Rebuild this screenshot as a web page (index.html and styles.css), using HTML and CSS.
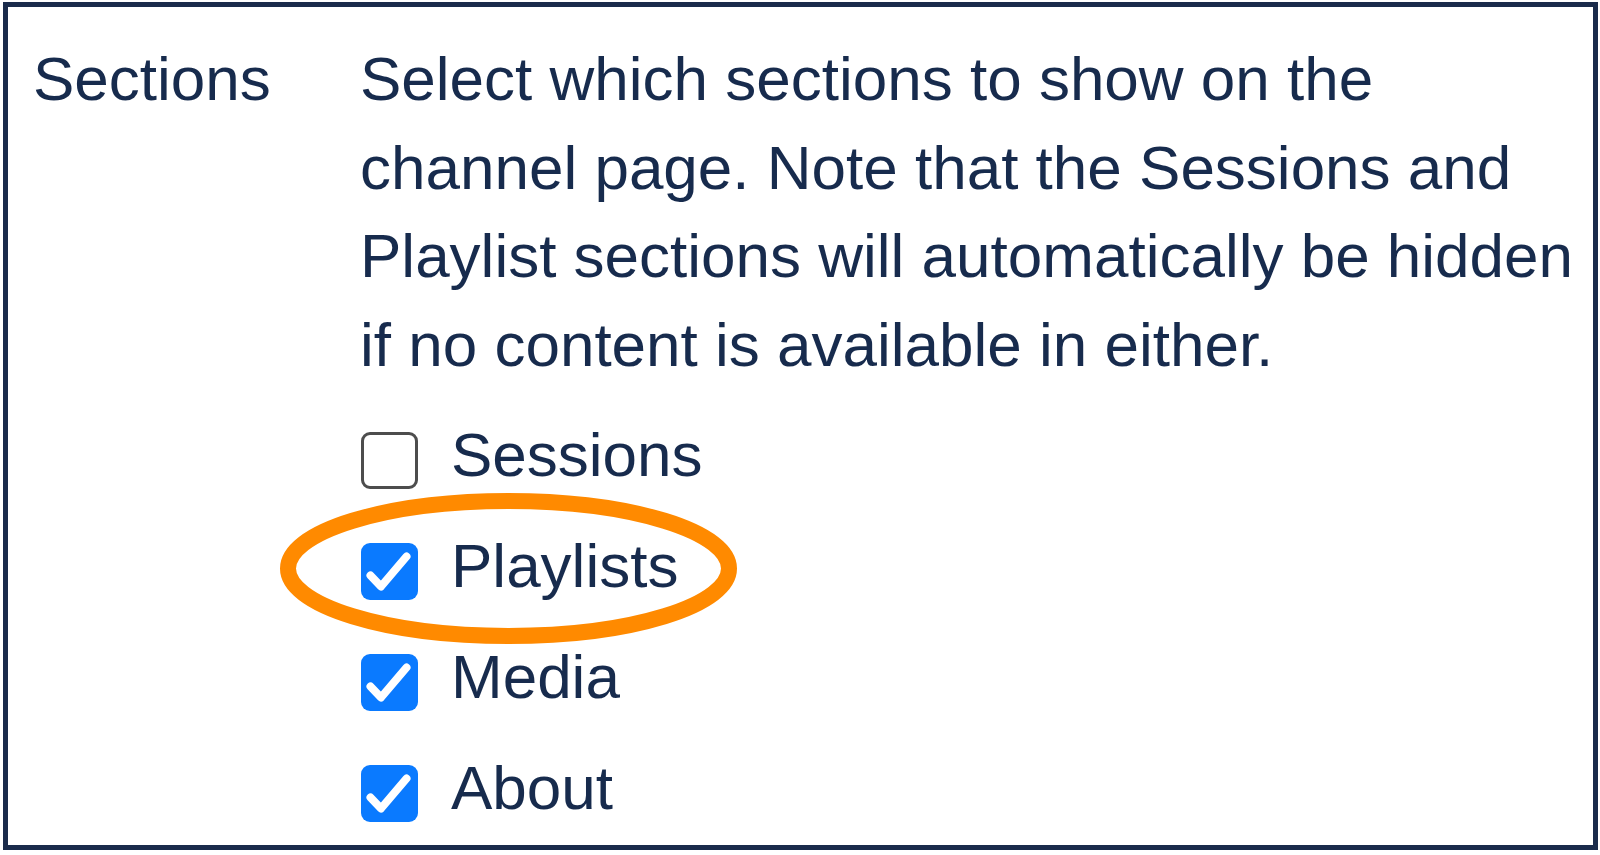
FILE: index.html
```html
<!DOCTYPE html>
<html lang="en">
<head>
  <meta charset="UTF-8">
  <meta name="viewport" content="width=device-width, initial-scale=1.0">
  <link rel="stylesheet" href="styles.css">
  <title>Channel sections</title>
</head>
<body>
  <div class="frame">
    <div class="setting">
      <div class="setting-label">Sections</div>
      <div class="setting-body">
        <p class="help">Select which sections to show on the channel page. Note that the Sessions and Playlist sections will automatically be hidden if no content is available in either.</p>

        <!-- Section toggles -->
        <div class="options">
          <label class="option">
            <span class="box"></span>
            <span class="option-text">Sessions</span>
          </label>
          <label class="option highlighted">
            <span class="box checked">
              <svg viewBox="0 0 57 57"><polyline points="9.5,32.5 20,43.5 45.5,13.5"/></svg>
            </span>
            <span class="option-text">Playlists</span>
            <svg class="ring" viewBox="0 0 457 151"><ellipse cx="228.5" cy="75.5" rx="220.5" ry="67.5"/></svg>
          </label>
          <label class="option">
            <span class="box checked">
              <svg viewBox="0 0 57 57"><polyline points="9.5,32.5 20,43.5 45.5,13.5"/></svg>
            </span>
            <span class="option-text">Media</span>
          </label>
          <label class="option">
            <span class="box checked">
              <svg viewBox="0 0 57 57"><polyline points="9.5,32.5 20,43.5 45.5,13.5"/></svg>
            </span>
            <span class="option-text">About</span>
          </label>
        </div>
      </div>
    </div>
  </div>
</body>
</html>
```

FILE: styles.css
```css
body {
  margin: 0;
  background-color: #fff;
  font-family: "Liberation Sans", Arial, sans-serif;
  color: #172b4d;
}

.frame {
  box-sizing: border-box;
  width: 1595px;
  height: 848px;
  margin: 2px 0 0 3px;
  border: 5px solid #1a2b4b;
  padding: 28px 0 0 25px;
  overflow: hidden;
}

.setting {
  display: flex;
}

.setting-label {
  width: 327px;
  flex-shrink: 0;
  font-size: 62px;
  line-height: 1.43;
}

.setting-body {
  flex: 1;
}

.help {
  margin: 0;
  font-size: 62px;
  line-height: 1.43;
}

.options {
  display: flex;
  flex-direction: column;
  margin-top: 9px;
}

.option {
  position: relative;
  display: flex;
  align-items: center;
  height: 111px;
  font-size: 62px;
  line-height: 111px;
}

.box {
  box-sizing: border-box;
  width: 57px;
  height: 57px;
  margin-top: 13px;
  margin-left: 1px;
  margin-right: 33px;
  border: 3px solid #4d4d4d;
  border-radius: 9px;
  background-color: #fff;
  flex-shrink: 0;
}

.box.checked {
  border: none;
  background-color: #0a7aff;
}

.box svg {
  display: block;
  width: 57px;
  height: 57px;
}

.box polyline {
  fill: none;
  stroke: #fff;
  stroke-width: 8;
  stroke-linecap: round;
  stroke-linejoin: round;
}

/* orange ring drawn over the Playlists row */
.ring {
  position: absolute;
  left: -80px;
  top: -17px;
  width: 457px;
  height: 151px;
  pointer-events: none;
}

.ring ellipse {
  fill: none;
  stroke: #ff8a00;
  stroke-width: 16;
}
```
